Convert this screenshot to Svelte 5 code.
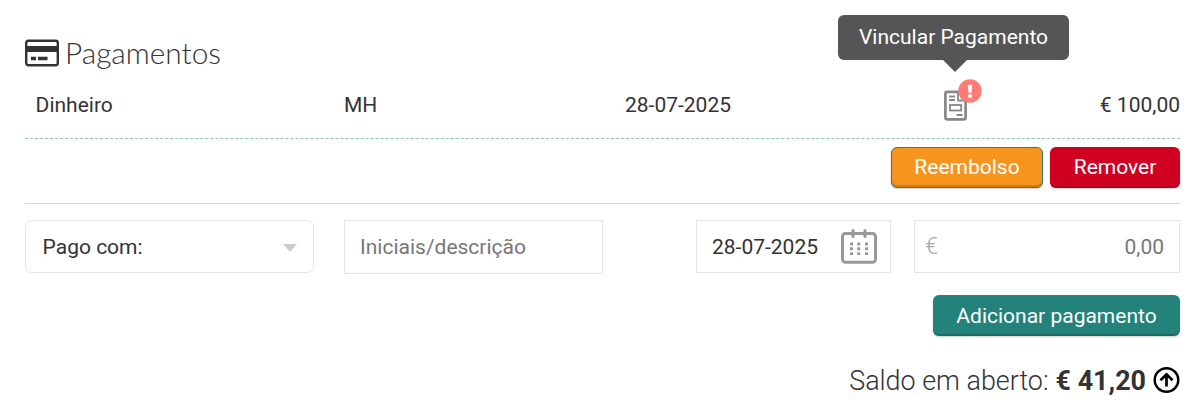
<script lang="ts">
	let method = $state('Pago com:');
	let description = $state('');
	let date = $state('28-07-2025');
	let amount = $state('');

	const payment = {
		method: 'Dinheiro',
		description: 'MH',
		date: '28-07-2025',
		amount: '€ 100,00'
	};
</script>

<section class="payments">
	<h2 class="title">
		<svg class="card-icon" viewBox="0 0 34 28" aria-hidden="true">
			<rect x="1.2" y="1.7" width="31.6" height="24.6" rx="2.2" fill="none" stroke="#333" stroke-width="2.4" />
			<path d="M1 7h32v6H1zM6 17.7h5v3.6H6zM13 17.7h9.5v3.6H13z" fill="#333" />
		</svg>
		<span>Pagamentos</span>
	</h2>

	<div class="row payment">
		<span class="method">{payment.method}</span>
		<span>{payment.description}</span>
		<span>{payment.date}</span>
		<button class="link-btn" aria-label="Vincular Pagamento">
			<svg width="24" height="31" viewBox="0 0 24 31" fill="none" stroke="#888" stroke-width="1.8">
				<rect x="1.4" y="1.9" width="20.2" height="27.4" rx="1.8" stroke-width="2.7" />
				<path d="M5 6.5h6M5 10h6M12.5 25h6M14 2v8.5h7" />
				<rect x="6" y="15" width="11.2" height="5.5" />
			</svg>
			<span class="badge">
				<svg width="24" height="24" viewBox="0 0 24 24">
					<circle cx="12" cy="12" r="11.7" fill="#ff7b74" />
					<path d="M9.8 5.8h4.4l-.7 8h-3z" fill="#fff" />
					<circle cx="12" cy="16.9" r="2" fill="#fff" />
				</svg>
			</span>
			<span class="tooltip">Vincular Pagamento</span>
		</button>
		<span>{payment.amount}</span>
	</div>

	<div class="actions">
		<button class="btn refund">Reembolso</button>
		<button class="btn remove">Remover</button>
	</div>

	<div class="row form">
		<button class="field select">
			<span>{method}</span>
			<span class="caret"></span>
		</button>
		<input class="field description" placeholder="Iniciais/descrição" bind:value={description} />
		<label class="field date">
			<input bind:value={date} aria-label="Data" />
			<svg width="36" height="35" viewBox="0 0 36 35" fill="none" stroke="#999">
				<rect x="1.5" y="4.5" width="33" height="28.8" rx="3" stroke-width="3" />
				<path d="M12 1.5v6M24 1.5v6" stroke-width="3" stroke-linecap="round" />
				<path
					d="M9 15h3M16.2 15h3M24 15h3M9 19.8h3M16.2 19.8h3M24 19.8h3M9 24.6h3M16.2 24.6h3M24 24.6h3"
					stroke-width="2.9"
				/>
			</svg>
		</label>
		<label class="field money">
			<span>€</span>
			<input placeholder="0,00" bind:value={amount} aria-label="Valor" />
		</label>
	</div>

	<div class="submit">
		<button class="btn add">Adicionar pagamento</button>
	</div>

	<div class="balance">
		<span>Saldo em aberto:</span>
		<strong>€ 41,20</strong>
		<svg width="27" height="26" viewBox="0 0 27 26" fill="none" stroke="#000">
			<circle cx="13.5" cy="13" r="11.8" stroke-width="2.4" />
			<path d="M13.5 19.5V8M7.5 13.3l6-6 6 6" stroke-width="2.7" />
		</svg>
	</div>
</section>

<style>
	:global(body) {
		background: #fff;
	}

	.payments {
		box-sizing: border-box;
		height: 416px;
		padding: 33px 18px 0 25px;
		overflow: hidden;
		color: #333;
		font: 21px/24px Roboto, sans-serif;
	}

	button,
	input {
		margin: 0;
		padding: 0;
		border: none;
		background: none;
		color: inherit;
		font: inherit;
		outline: none;
	}

	.title {
		display: flex;
		align-items: center;
		gap: 6px;
		height: 40px;
		margin: 0;
		font: 300 29.8px/40px Lato, sans-serif;
	}

	.card-icon {
		width: 34px;
		height: 28px;
	}

	.row {
		display: grid;
		grid-template-columns: 319px 281px 289px 266px;
	}

	.payment {
		grid-template-columns: 319px 281px 319px 1fr auto;
		align-items: center;
		height: 65px;
		border-bottom: 1px dashed #8fc4bb;
	}

	.payment > span {
		margin-top: -1px;
	}

	.method {
		padding-left: 10.6px;
	}

	.link-btn {
		position: relative;
		width: 24px;
		height: 31px;
	}

	.link-btn svg {
		display: block;
	}

	.badge {
		position: absolute;
		top: -11px;
		left: 14px;
	}

	.tooltip {
		position: absolute;
		bottom: 61px;
		left: -106px;
		width: 231px;
		border-radius: 6px;
		background: #555;
		color: #fff;
		line-height: 45px;
		text-align: center;
	}

	.tooltip::after {
		content: '';
		position: absolute;
		top: 100%;
		left: 105px;
		border: 12px solid transparent;
		border-top-color: #555;
		border-bottom: none;
	}

	.actions {
		display: flex;
		justify-content: flex-end;
		gap: 7px;
		height: 41px;
		padding: 8px 0 15px;
		border-bottom: 1px solid #d9d9d9;
	}

	.btn {
		box-sizing: border-box;
		height: 41px;
		border-radius: 6px;
		color: #fff;
		line-height: 40px;
		box-shadow: inset 0 -2px 0 rgba(0, 0, 0, 0.16), 0 1px 2px rgba(0, 0, 0, 0.2);
	}

	.refund {
		width: 152px;
		padding-bottom: 1px;
		border: 1px solid #23827a;
		background: #f7941d;
		line-height: 38px;
	}

	.remove {
		width: 130px;
		padding-bottom: 1px;
		background: #d00023;
	}

	.form {
		align-items: start;
		margin-top: 16px;
	}

	.field {
		display: flex;
		box-sizing: border-box;
		align-items: center;
		height: 53px;
		border: 1px solid #e5e5e5;
	}

	.select {
		justify-content: space-between;
		width: 289px;
		padding: 0 16px 0 16.6px;
		border-radius: 7px;
	}

	.caret {
		margin-top: 3px;
		border: 7px solid transparent;
		border-top: 8px solid #ccc;
		border-bottom: none;
	}

	.description {
		width: 259px;
		height: 54px;
		padding: 0 15px;
	}

	.date {
		width: 195px;
		margin-left: 71px;
		padding: 0 13px 0 15px;
		justify-content: space-between;
	}

	.date input {
		width: 118px;
	}

	.money {
		width: 266px;
		padding: 0 15px 0 10px;
	}

	.money span {
		margin-top: -2px;
		color: #aaa;
		font-size: 23.5px;
		font-weight: 300;
	}

	.money input {
		min-width: 0;
		flex: 1;
		text-align: right;
	}

	input::placeholder {
		color: #777;
		opacity: 1;
	}

	.submit {
		display: flex;
		justify-content: flex-end;
		margin-top: 21px;
	}

	.add {
		width: 247px;
		background: #23827a;
	}

	.balance {
		display: flex;
		align-items: center;
		justify-content: flex-end;
		gap: 7px;
		margin-top: 28px;
		font-size: 26.9px;
		font-weight: 300;
		line-height: 32px;
	}

	.balance span,
	.balance strong {
		padding-top: 1px;
		margin-bottom: -1px;
	}

	.balance strong {
		font-weight: 700;
	}
</style>
